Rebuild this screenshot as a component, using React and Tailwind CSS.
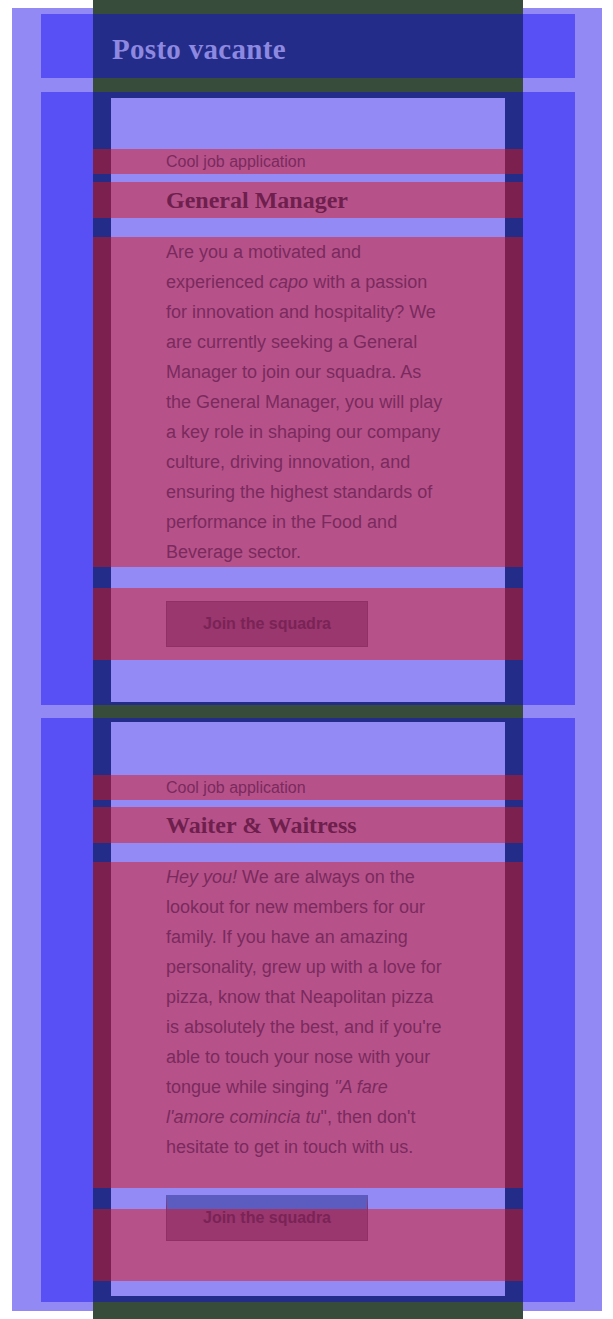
import React from 'react';

const sans = { fontFamily: '"Liberation Sans", Arial, sans-serif' };

function Band({ className = '', children }) {
  return (
    <div className={`-mx-[18px] flow-root bg-[rgba(220,20,15,0.47)] pl-[73px] pr-[73px] ${className}`}>
      {children}
    </div>
  );
}

function JobCard({ title, text, cardClass, innerClass, paraClass, buttonClass }) {
  return (
    <section className={`-ml-[52px] -mr-[52px] flow-root bg-[rgba(10,0,245,0.42)] ${cardClass}`}>
      <div className={`mx-[70px] flow-root bg-[#938af5] ${innerClass}`}>
        <Band className="h-[25px]">
          <p className="font-['Liberation_Sans',Arial,sans-serif] text-[16px] leading-[25px] text-[#7a2a5e]">
            Cool job application
          </p>
        </Band>
        <Band className={title.bandClass}>
          <h2 className="font-['Liberation_Serif','Times_New_Roman',serif] text-[24px] font-bold leading-[36px] text-[#6e1f4d]">
            {title.label}
          </h2>
        </Band>
        <Band className={paraClass}>
          <p className="font-['Liberation_Sans',Arial,sans-serif] text-[18px] leading-[30px] text-[#7a2a5e]">
            {text}
          </p>
        </Band>
        <Band className="mt-[21px] h-[72px]">
          <button
            className={`flex h-[46px] w-[202px] items-center justify-center border-x border-b border-x-[rgba(120,30,80,0.25)] border-b-[rgba(120,30,80,0.25)] bg-[#99376e] font-['Liberation_Sans',Arial,sans-serif] text-[16px] font-bold text-[#7a2356] ${buttonClass}`}
          >
            Join the squadra
          </button>
        </Band>
      </div>
    </section>
  );
}

export default function App() {
  return (
    <div className="h-[1319px] w-full overflow-hidden bg-white pl-[12px] pt-[8px]" style={sans}>
      <div className="flow-root h-[1303px] w-[590px] bg-[#9289f5]">
        <main className="-mt-[8px] ml-[81px] flex h-[1319px] w-[430px] flex-col bg-[#384c3c]">
          {/* Header */}
          <header className="-ml-[52px] -mr-[52px] mt-[14px] flex h-[64px] items-center bg-[rgba(10,0,245,0.42)] pl-[71px] pt-[8px]">
            <h1 className="font-['Liberation_Serif','Times_New_Roman',serif] text-[29px] font-bold tracking-[0.3px] text-[#8d88e0]">
              Posto vacante
            </h1>
          </header>

          <JobCard
            cardClass="mt-[14px] h-[613px] pt-[6px]"
            innerClass="h-[604px] pt-[51px]"
            title={{ label: 'General Manager', bandClass: 'mt-[8px] h-[36px]' }}
            paraClass="mt-[19px] h-[330px]"
            buttonClass="mt-[13px] border-t border-t-[rgba(120,30,80,0.25)]"
            text={
              <>
                Are you a motivated and experienced <em>capo</em> with a passion for innovation and
                hospitality? We are currently seeking a General Manager to join our squadra. As the
                General Manager, you will play a key role in shaping our company culture, driving
                innovation, and ensuring the highest standards of performance in the Food and Beverage
                sector.
              </>
            }
          />

          <JobCard
            cardClass="mt-[13px] h-[584px] pt-[4px]"
            innerClass="h-[574px] pt-[53px]"
            title={{ label: 'Waiter & Waitress', bandClass: 'mt-[7px] h-[36px]' }}
            paraClass="mt-[19px] h-[326px]"
            buttonClass="-mt-[14px] border-t-[14px] border-t-[#5c5cc0] pb-[14px]"
            text={
              <>
                <em>Hey you!</em> We are always on the lookout for new members for our family. If you
                have an amazing personality, grew up with a love for pizza, know that Neapolitan pizza
                is absolutely the best, and if you're able to touch your nose with your tongue while
                singing <em>"A fare l'amore comincia tu</em>", then don't hesitate to get in touch with
                us.
              </>
            }
          />
        </main>
      </div>
    </div>
  );
}
